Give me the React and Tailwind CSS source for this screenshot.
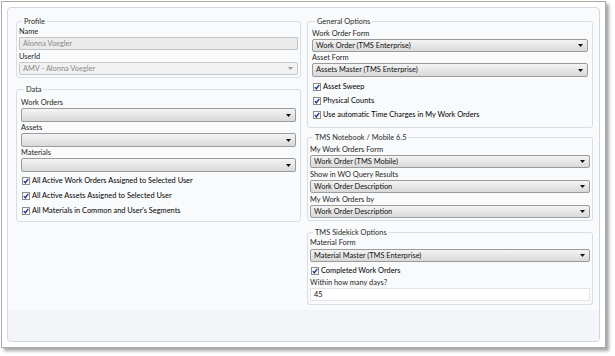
import React from "react";

function Arrow({ gray }) {
  return (
    <svg width="5" height="3" viewBox="0 0 5 3" className="shrink-0">
      <path d="M0 0H5L2.5 3Z" fill={gray ? "#9a9a9a" : "#111"} />
    </svg>
  );
}

function Select({ text, h = "h-[13px]", className = "" }) {
  return (
    <div
      className={
        "flex items-center justify-between rounded-[2px] border border-[#9b9b9b] bg-linear-to-b from-[#f4f4f4] to-[#d9d9d9] pl-[3px] pr-[4px] text-[#111] " +
        h +
        " " +
        className
      }
    >
      <span className="leading-none">{text}</span>
      <Arrow />
    </div>
  );
}

function Check({ children, h = "h-[15px]", className = "" }) {
  return (
    <div className={"flex items-center gap-[2px] " + h + " " + className}>
      <svg width="8" height="8" viewBox="0 0 8 8" className="shrink-0">
        <rect x="0.5" y="0.5" width="7" height="7" fill="#fbfbfb" stroke="#8c8c8c" />
        <path d="M1.8 4.1L3.3 5.8L6.3 1.9" fill="none" stroke="#1f3b8f" strokeWidth="1.4" />
      </svg>
      <span className="leading-none">{children}</span>
    </div>
  );
}

function Label({ children, className = "" }) {
  return <div className={"flex items-center text-[#1d1d1d] " + className}>{children}</div>;
}

function Group({ title, className = "", children }) {
  return (
    <fieldset className={"rounded-[3px] border border-[#d8dee5] " + className}>
      <legend className="ml-[3px] h-[11px] px-[2px] leading-[11px] text-[#2b2b2b]">{title}</legend>
      {children}
    </fieldset>
  );
}

export default function App() {
  return (
    <div className="h-[356px] w-[615px] bg-white pl-[1px] pt-[1px] font-['Lato',sans-serif] text-[7.4px]">
      <div className="h-[347px] w-[605px] border border-[#a9a9a9] bg-white p-[5px] shadow-[3px_3px_3px_rgba(0,0,0,0.35)]">
        <div className="flex h-full w-full flex-col rounded-[4px] border border-[#cfd8e2] bg-[#f9fafb]">
          <div className="grid flex-1 grid-cols-[285px_286px] items-start gap-x-[6px] pl-[8px] pr-[6px] pt-[8px]">
            {/* Left column */}
            <div className="flex flex-col">
              <Group title="Profile" className="px-[2px] pb-[2px]">
                <Label className="h-[10px]">Name</Label>
                <div className="flex h-[13px] items-center rounded-[1px] border border-[#c3c3c3] bg-[#ebebeb] pl-[3px] text-[#8a8a8a]">
                  Alonna Voegler
                </div>
                <Label className="mt-[1px] h-[11px]">UserId</Label>
                <div className="flex h-[13px] items-center justify-between rounded-[2px] border border-[#c9c9c9] bg-[#f1f1f1] pl-[3px] pr-[4px] text-[#8a8a8a]">
                  <span>AMV - Alonna Voegler</span>
                  <Arrow gray />
                </div>
              </Group>
              <Group title="Data" className="mt-[6px] px-[4px] pb-[3px]">
                <Label className="mt-[3px] h-[10px]">Work Orders</Label>
                <Select text="" h="h-[14px]" />
                <Label className="h-[11px]">Assets</Label>
                <Select text="" h="h-[14px]" />
                <Label className="h-[11px]">Materials</Label>
                <Select text="" h="h-[14px]" />
                <div className="mt-[1px] pl-[1px]">
                  <Check>All Active Work Orders Assigned to Selected User</Check>
                  <Check>All Active Assets Assigned to Selected User</Check>
                  <Check>All Materials in Common and User's Segments</Check>
                </div>
              </Group>
            </div>

            {/* Right column */}
            <div className="flex flex-col">
              <Group title="General Options" className="px-[4px] pb-[5px]">
                <Label className="mt-[2px] h-[10px]">Work Order Form</Label>
                <Select text="Work Order (TMS Enterprise)" />
                <Label className="h-[11px]">Asset Form</Label>
                <Select text="Assets Master (TMS Enterprise)" h="h-[14px]" />
                <div className="mt-[3px] pl-[1px]">
                  <Check h="h-[14px]">Asset Sweep</Check>
                  <Check h="h-[14px]">Physical Counts</Check>
                  <Check h="h-[14px]">Use automatic Time Charges in My Work Orders</Check>
                </div>
              </Group>
              <Group title="TMS Notebook / Mobile 6.5" className="mt-[4px] px-[2px] pb-[2px]">
                <Label className="mt-[2px] h-[10px]">My Work Orders Form</Label>
                <Select text="Work Order (TMS Mobile)" />
                <Label className="mt-[1px] h-[11px]">Show in WO Query Results</Label>
                <Select text="Work Order Description" />
                <Label className="mt-[1px] h-[11px]">My Work Orders by</Label>
                <Select text="Work Order Description" />
              </Group>
              <Group title="TMS Sidekick Options" className="mt-[6px] px-[2px] pb-[3px]">
                <Label className="h-[10px]">Material Form</Label>
                <Select text="Material Master (TMS Enterprise)" className="mt-[1px]" />
                <div className="pl-[1px]">
                  <Check className="mt-[1px]">Completed Work Orders</Check>
                </div>
                <Label className="h-[9px]">Within how many days?</Label>
                <div className="mt-[1px] flex h-[13px] items-center border border-[#e1e4e8] bg-white pl-[3px] text-[#111]">
                  45
                </div>
              </Group>
            </div>
          </div>
          <div className="h-[31px] rounded-b-[4px] bg-[#f3f5f8]" />
        </div>
      </div>
    </div>
  );
}
